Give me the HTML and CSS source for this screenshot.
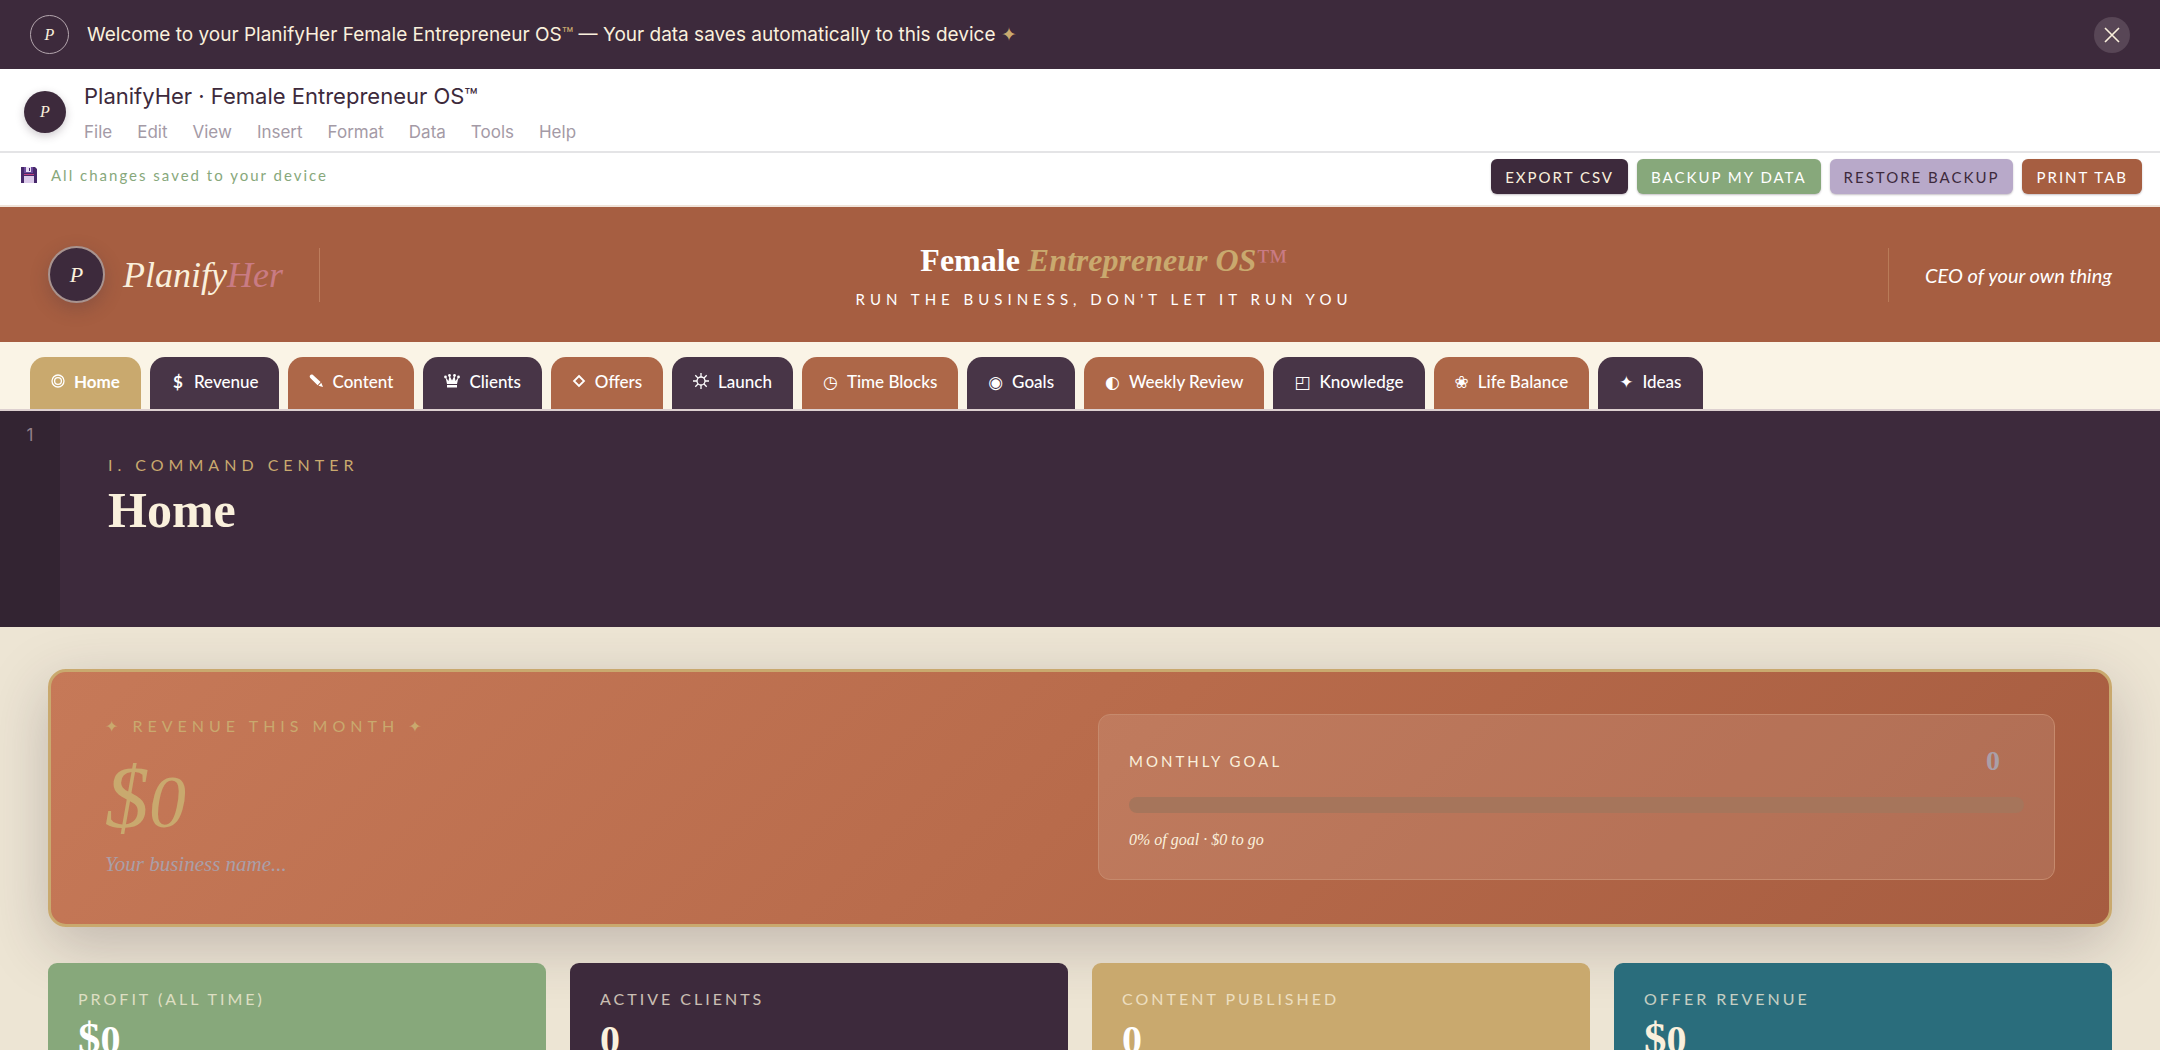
FILE: index.html
```html
<!DOCTYPE html>
<html lang="en">
<head>
  <meta charset="UTF-8" />
  <meta name="viewport" content="width=device-width, initial-scale=1.0" />
  <title>PlanifyHer · Female Entrepreneur OS™</title>
  <link rel="stylesheet" href="styles.css">
</head>
<body>
  <div class="welcome">
    <span class="logo logo--outline">P</span>
    <p class="welcome__text">Welcome to your PlanifyHer Female Entrepreneur OS<span class="gold">™</span> — Your data saves automatically to this device <span class="gold">✦</span></p>
    <button class="welcome__close" type="button" aria-label="Close">
      <svg width="16" height="16" viewBox="0 0 16 16" fill="none" stroke="currentColor" stroke-width="1.6"><path d="M1 1l14 14M15 1L1 15"/></svg>
    </button>
  </div>

  <div class="doc">
    <span class="logo logo--doc">P</span>
    <div>
      <div class="doc__title">PlanifyHer · Female Entrepreneur OS™</div>
      <nav class="doc__menu">
        <a href="#">File</a>
        <a href="#">Edit</a>
        <a href="#">View</a>
        <a href="#">Insert</a>
        <a href="#">Format</a>
        <a href="#">Data</a>
        <a href="#">Tools</a>
        <a href="#">Help</a>
      </nav>
    </div>
  </div>

  <div class="toolbar">
    <div class="toolbar__status">
      <svg width="16" height="16" viewBox="0 0 16 16">
        <path d="M0 0h14l2 2v14H0z" fill="#47296b"/>
        <path d="M3 0h9v6H3z" fill="#6d4a9c"/>
        <path d="M5 0h5v5H5z" fill="#e9dff3"/>
        <path d="M8 1h1v3H8z" fill="#47296b"/>
        <path d="M3 7h10v1H3z" fill="#c2417f"/>
        <path d="M3 9h10v7H3z" fill="#dccbea"/>
      </svg>
      All changes saved to your device
    </div>
    <div class="toolbar__buttons">
      <button class="btn btn--plum" type="button">Export CSV</button>
      <button class="btn btn--sage" type="button">Backup My Data</button>
      <button class="btn btn--lilac" type="button">Restore Backup</button>
      <button class="btn btn--rust" type="button">Print Tab</button>
    </div>
  </div>

  <header class="brand">
    <div class="brand__left">
      <span class="logo logo--brand">P</span>
      <span class="brand__name">Planify<span class="rose">Her</span></span>
    </div>
    <div class="brand__center">
      <h1>Female <em>Entrepreneur OS</em><span class="brand__tm">™</span></h1>
      <p>Run the business, don't let it run you</p>
    </div>
    <div class="brand__right">CEO of your own thing</div>
  </header>

  <nav class="tabs">
    <button class="tab tab--active" type="button"><span class="tab__icon"><svg width="14" height="14" viewBox="0 0 14 14" fill="none" stroke="currentColor" stroke-width="1.3"><circle cx="7" cy="7" r="6"/><circle cx="7" cy="7" r="3.4"/></svg></span>Home</button>
    <button class="tab" type="button"><span class="tab__icon">$</span>Revenue</button>
    <button class="tab" type="button"><span class="tab__icon"><svg width="14" height="14" viewBox="0 0 14 14" fill="currentColor"><path d="M1 1.5C1.6.4 3 .2 4 1l7.600 7-3 3.200L1.300 4C.6 3.200.6 2.200 1 1.500zM12.300 8.800L14 13l-4.500-1.300z"/></svg></span>Content</button>
    <button class="tab" type="button"><span class="tab__icon"><svg width="16" height="14" viewBox="0 0 16 14" fill="currentColor"><circle cx="1.500" cy="3" r="1.400"/><circle cx="5.500" cy="1.500" r="1.400"/><circle cx="10.500" cy="1.500" r="1.400"/><circle cx="14.500" cy="3" r="1.400"/><path d="M1.500 3l3 4L5.500 1.500 8 6.500l2.500-5 1 5.500 3-4-1.500 7H3zM3 11h10v2.500H3z"/></svg></span>Clients</button>
    <button class="tab" type="button"><span class="tab__icon"><svg width="14" height="14" viewBox="0 0 14 14" fill="none" stroke="currentColor" stroke-width="1.8"><path d="M7 2l5 5-5 5-5-5z"/></svg></span>Offers</button>
    <button class="tab" type="button"><span class="tab__icon"><svg width="16" height="16" viewBox="0 0 16 16" fill="none" stroke="currentColor" stroke-width="1.3"><circle cx="8" cy="8" r="4"/><path d="M8 0v4M8 12v4M0 8h4M12 8h4M2.300 2.300l2.900 2.900M10.800 10.800l2.900 2.900M2.300 13.700l2.900-2.900M10.800 5.200l2.900-2.900"/></svg></span>Launch</button>
    <button class="tab" type="button"><span class="tab__icon">◷</span>Time Blocks</button>
    <button class="tab" type="button"><span class="tab__icon">◉</span>Goals</button>
    <button class="tab" type="button"><span class="tab__icon">◐</span>Weekly Review</button>
    <button class="tab" type="button"><span class="tab__icon">◰</span>Knowledge</button>
    <button class="tab" type="button"><span class="tab__icon">❀</span>Life Balance</button>
    <button class="tab" type="button"><span class="tab__icon">✦</span>Ideas</button>
  </nav>

  <section class="hero">
    <div class="hero__gutter">1</div>
    <div class="hero__body">
      <p class="hero__label">I. Command Center</p>
      <h2>Home</h2>
    </div>
  </section>

  <main class="content">
    <section class="revenue">
      <div class="revenue__main">
        <p class="revenue__label">✦ Revenue this month ✦</p>
        <div class="revenue__value">$<span>0</span></div>
        <input class="revenue__name" type="text" placeholder="Your business name..." aria-label="Business name" />
      </div>
      <div class="goal">
        <div class="goal__row">
          <label for="goal">Monthly Goal</label>
          <input id="goal" type="text" placeholder="0" />
        </div>
        <div class="goal__bar"></div>
        <p class="goal__note">0% of goal · $0 to go</p>
      </div>
    </section>

    <section class="stats">
      <div class="stat stat--sage">
        <p class="stat__label">Profit (all time)</p>
        <div class="stat__value">$<span>0</span></div>
      </div>
      <div class="stat stat--plum">
        <p class="stat__label">Active clients</p>
        <div class="stat__value"><span>0</span></div>
      </div>
      <div class="stat stat--gold">
        <p class="stat__label">Content published</p>
        <div class="stat__value"><span>0</span></div>
      </div>
      <div class="stat stat--teal">
        <p class="stat__label">Offer revenue</p>
        <div class="stat__value">$<span>0</span></div>
      </div>
    </section>
  </main>
</body>
</html>
```
FILE: styles.css
```css
:root {
  --plum: #3d2a3c;
  --rust: #a65e41;
  --gold: #c9a96e;
  --sage: #87a87b;
  --lilac: #b8a9c9;
  --teal: #2a6d7c;
  --cream: #faf0dc;
  --sans: Inter, "DejaVu Sans", sans-serif;
  --geo: Lato, "DejaVu Sans", sans-serif;
  --serif: "Liberation Serif", "DejaVu Serif", serif;
}
* {
  box-sizing: border-box;
}
body {
  margin: 0;
  height: 100vh;
  overflow: hidden;
  display: flex;
  flex-direction: column;
  background: #ede5d4;
  color: var(--plum);
  font-family: var(--geo);
}
body > * {
  flex-shrink: 0;
}
p, h1, h2 {
  margin: 0;
}
button, input {
  font-family: inherit;
  border: none;
}
.gold {
  color: var(--gold);
}
.rose {
  color: #c97b84;
}

.logo {
  display: flex;
  align-items: center;
  justify-content: center;
  flex-shrink: 0;
  border-radius: 50%;
  background: var(--plum);
  color: var(--cream);
  font-family: var(--serif);
  font-style: italic;
}
.logo--outline {
  width: 39px;
  height: 39px;
  border: 1px solid #b4a6ae;
  font-size: 16px;
}
.logo--doc {
  width: 42px;
  height: 42px;
  font-size: 16px;
  box-shadow: 0 3px 9px rgba(61, 42, 60, 0.25);
}
.logo--brand {
  width: 57px;
  height: 57px;
  border: 2px solid #a8938f;
  font-size: 22px;
  box-shadow: 0 6px 18px rgba(61, 42, 60, 0.25);
}

.welcome {
  display: flex;
  align-items: center;
  gap: 18px;
  height: 69px;
  padding: 0 30px;
  background: var(--plum);
  color: var(--cream);
}
.welcome__text {
  flex: 1;
  font-family: var(--sans);
  font-size: 19px;
}
.welcome__close {
  display: flex;
  align-items: center;
  justify-content: center;
  width: 36px;
  height: 36px;
  padding: 0;
  border-radius: 50%;
  background: #584656;
  color: var(--cream);
}

.doc {
  display: flex;
  align-items: center;
  gap: 18px;
  height: 84px;
  padding: 4px 24px 0;
  background: #fff;
  border-bottom: 2px solid #e4e4e6;
}
.doc__title {
  font-family: var(--sans);
  font-size: 22px;
  line-height: 32px;
}
.doc__menu {
  display: flex;
  gap: 25px;
  margin-top: 8px;
  font-family: var(--sans);
  font-size: 17px;
  line-height: 24px;
}
.doc__menu a {
  color: #a49aa6;
  text-decoration: none;
}

.toolbar {
  display: flex;
  align-items: flex-start;
  justify-content: space-between;
  height: 54px;
  padding: 6px 18px 0 21px;
  background: #fff;
  border-bottom: 2px solid #f0e4da;
}
.toolbar__status {
  display: flex;
  align-items: center;
  gap: 14px;
  color: #87a87b;
  font-size: 15px;
  line-height: 32px;
  letter-spacing: 2px;
}
.toolbar__buttons {
  display: flex;
  gap: 9px;
}
.btn {
  height: 35px;
  padding: 0 14px;
  border-radius: 6px;
  font-size: 15px;
  letter-spacing: 2px;
  text-transform: uppercase;
  box-shadow: 0 1px 2px rgba(61, 42, 60, 0.3);
}
.btn--plum {
  background: var(--plum);
  color: var(--cream);
}
.btn--sage {
  background: var(--sage);
  color: #fff;
}
.btn--lilac {
  background: var(--lilac);
  color: var(--plum);
}
.btn--rust {
  background: var(--rust);
  color: #fff;
}

.brand {
  display: grid;
  grid-template-columns: auto 1fr auto;
  align-items: center;
  height: 135px;
  padding: 0 48px;
  background: var(--rust);
  color: #fff;
}
.brand__left {
  display: flex;
  align-items: center;
  gap: 18px;
  height: 54px;
  padding-right: 36px;
  border-right: 1px solid #bd7d5d;
}
.brand__name {
  color: var(--cream);
  font-family: var(--serif);
  font-size: 36px;
  font-style: italic;
}
.brand__center {
  text-align: center;
}
.brand__center h1 {
  font-family: var(--serif);
  font-size: 32px;
  line-height: 42px;
}
.brand__center em {
  color: var(--gold);
}
.brand__tm {
  color: #c97b84;
  font-weight: normal;
}
.brand__center p {
  margin-top: 6px;
  font-size: 15px;
  line-height: 24px;
  letter-spacing: 5px;
  text-transform: uppercase;
}
.brand__right {
  padding-left: 36px;
  border-left: 1px solid #b97b58;
  font-size: 20px;
  font-style: italic;
  line-height: 54px;
}

.tabs {
  display: flex;
  align-items: flex-end;
  gap: 9px;
  height: 69px;
  padding: 0 30px;
  background: #faf4e6;
  border-bottom: 2px solid #ddd0d0;
}
.tab {
  display: flex;
  align-items: center;
  gap: 9px;
  height: 52px;
  padding: 0 21px 4px;
  border-radius: 15px 15px 0 0;
  background: #483547;
  color: #fff;
  font-size: 17px;
  font-weight: 500;
}
.tab:nth-child(odd) {
  background: #ad6748;
}
.tab.tab--active {
  background: var(--gold);
  font-weight: bold;
}
.tab__icon {
  display: flex;
  justify-content: center;
  min-width: 14px;
  font-weight: bold;
}

.hero {
  display: flex;
  height: 216px;
  background: var(--plum);
}
.hero__gutter {
  width: 60px;
  padding-top: 14px;
  background: #332432;
  color: #93808a;
  font-family: var(--sans);
  font-size: 17px;
  text-align: center;
}
.hero__body {
  padding: 42px 48px;
}
.hero__label {
  color: var(--gold);
  font-size: 16px;
  line-height: 24px;
  letter-spacing: 5px;
  text-transform: uppercase;
}
.hero h2 {
  color: var(--cream);
  font-family: var(--serif);
  font-size: 50px;
  line-height: 66px;
}

.content {
  padding: 42px 48px;
}
.revenue {
  display: grid;
  grid-template-columns: 1fr 1fr;
  gap: 36px;
  padding: 42px 54px;
  border: 3px solid var(--gold);
  border-radius: 18px;
  background: linear-gradient(135deg, #c67958, #b86b4b 50%, #a65c40);
  box-shadow: 0 18px 60px rgba(61, 42, 60, 0.25);
}
.revenue__label {
  color: var(--gold);
  font-size: 16px;
  line-height: 24px;
  letter-spacing: 5px;
  text-transform: uppercase;
}
.revenue__value {
  height: 108px;
  color: var(--gold);
  font-family: var(--serif);
  font-size: 88px;
  font-style: italic;
  line-height: 120px;
}
.revenue__value span {
  font-size: 74px;
}
.revenue__name {
  display: block;
  width: 100%;
  height: 36px;
  padding: 0;
  background: none;
  font-family: var(--serif);
  font-size: 21px;
  font-style: italic;
}
.revenue__name::placeholder,
.goal input::placeholder {
  color: #aa9fa8;
}
.goal {
  height: 166px;
  padding: 29px 30px;
  border: 1px solid #c68a6d;
  border-radius: 12px;
  background: rgba(255, 255, 255, 0.1);
}
.goal__row {
  display: flex;
  align-items: center;
  justify-content: space-between;
  height: 33px;
}
.goal label {
  color: var(--cream);
  font-size: 15px;
  letter-spacing: 3px;
  text-transform: uppercase;
}
.goal input {
  width: 150px;
  padding: 0 24px 0 0;
  background: none;
  font-family: var(--serif);
  font-size: 28px;
  font-weight: bold;
  text-align: right;
}
.goal__bar {
  height: 16px;
  margin-top: 20px;
  border-radius: 8px;
  background: #a6755b;
}
.goal__note {
  margin-top: 15px;
  color: var(--cream);
  font-family: var(--serif);
  font-size: 16px;
  font-style: italic;
  line-height: 24px;
}

.stats {
  display: grid;
  grid-template-columns: repeat(4, 1fr);
  gap: 24px;
  margin-top: 36px;
}
.stat {
  padding: 24px 30px;
  border-radius: 9px;
  color: var(--cream);
}
.stat--sage {
  background: var(--sage);
}
.stat--plum {
  background: var(--plum);
}
.stat--gold {
  background: var(--gold);
}
.stat--teal {
  background: var(--teal);
}
.stat__label {
  font-size: 16px;
  line-height: 24px;
  letter-spacing: 3px;
  text-transform: uppercase;
  opacity: 0.75;
}
.stat__value {
  font-family: var(--serif);
  font-size: 45px;
  font-weight: bold;
  line-height: 54px;
}
.stat__value span {
  font-size: 40px;
}
.stat--sage .stat__value,
.stat--gold .stat__value {
  color: #fff;
}
```
